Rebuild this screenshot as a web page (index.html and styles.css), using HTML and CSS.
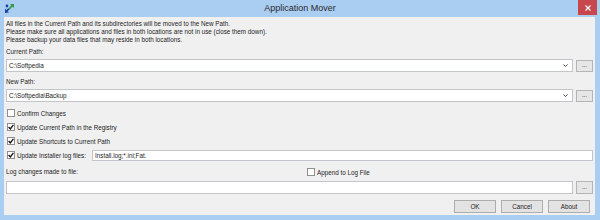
FILE: index.html
```html
<!DOCTYPE html>
<html>
<head>
<meta charset="utf-8">
<title>Application Mover</title>
<link rel="stylesheet" href="styles.css">
</head>
<body>
<div class="window">
  <div class="titlebar">
    <svg class="app-icon" width="11" height="11" viewBox="0 0 11 11">
      <path d="M6 1 L10 1 L10 5 L8.6 3.6 L5.5 6.7 L4.3 5.5 L7.4 2.4 Z" fill="#2f9a3c"/>
      <path d="M1 10 L1 5.6 L2.4 7 L4.2 5.2 L5.4 6.4 L3.6 8.2 L5 9.6 Z" fill="#1d3fae"/>
      <circle cx="3" cy="3" r="1.4" fill="#1d3fae"/>
    </svg>
    <div class="title">Application Mover</div>
    <div class="close">
      <svg width="6" height="6" viewBox="0 0 6 6"><path d="M0.5 0.5 L5.5 5.5 M5.5 0.5 L0.5 5.5" stroke="#fff" stroke-width="1.3"/></svg>
    </div>
  </div>
  <div class="client">
    <div class="info">
      <div>All files in the Current Path and its subdirectories will be moved to the New Path.</div>
      <div>Please make sure all applications and files in both locations are not in use (close them down).</div>
      <div>Please backup your data files that may reside in both locations.</div>
    </div>

    <div class="label first-label">Current Path:</div>
    <div class="path-row">
      <div class="combo"><span>C:\Softpedia</span><svg class="chev" width="5" height="3" viewBox="0 0 5 3"><polyline points="0.5,0.5 2.5,2.5 4.5,0.5" fill="none" stroke="#444" stroke-width="1"/></svg></div>
      <div class="browse">...</div>
    </div>

    <div class="label">New Path:</div>
    <div class="path-row">
      <div class="combo"><span>C:\Softpedia\Backup</span><svg class="chev" width="5" height="3" viewBox="0 0 5 3"><polyline points="0.5,0.5 2.5,2.5 4.5,0.5" fill="none" stroke="#444" stroke-width="1"/></svg></div>
      <div class="browse">...</div>
    </div>

    <div class="checks">
      <div class="check-row">
        <span class="box"></span><span>Confirm Changes</span>
      </div>
      <div class="check-row">
        <span class="box"><svg width="6" height="6" viewBox="0 0 6 6"><polyline points="0.6,3 2.3,4.9 5.4,0.8" fill="none" stroke="#111" stroke-width="1.3"/></svg></span><span>Update Current Path in the Registry</span>
      </div>
      <div class="check-row">
        <span class="box"><svg width="6" height="6" viewBox="0 0 6 6"><polyline points="0.6,3 2.3,4.9 5.4,0.8" fill="none" stroke="#111" stroke-width="1.3"/></svg></span><span>Update Shortcuts to Current Path</span>
      </div>
      <div class="check-row">
        <span class="box"><svg width="6" height="6" viewBox="0 0 6 6"><polyline points="0.6,3 2.3,4.9 5.4,0.8" fill="none" stroke="#111" stroke-width="1.3"/></svg></span><span class="installer-label">Update Installer log files:</span>
        <div class="text-input small">Install.log;*.ini;Fat.</div>
      </div>
    </div>

    <div class="log-row">
      <div class="label">Log changes made to file:</div>
      <div class="check-row append">
        <span class="box"></span><span>Append to Log File</span>
      </div>
    </div>

    <div class="path-row log-input">
      <div class="text-input"></div>
      <div class="browse">...</div>
    </div>

    <div class="buttons">
      <div class="btn">OK</div>
      <div class="btn">Cancel</div>
      <div class="btn">About</div>
    </div>
  </div>
</div>
</body>
</html>
```

FILE: styles.css
```css
html, body {
  margin: 0;
  padding: 0;
  background: #aacdf2;
}

.window {
  width: 600px;
  height: 220px;
  background: #aacdf2;
  display: flex;
  flex-direction: column;
  font-family: "Liberation Sans", Arial, sans-serif;
  font-size: 6.3px;
  color: #1c1c1c;
}

.titlebar {
  height: 17px;
  display: grid;
  grid-template-columns: 1fr auto 1fr;
  align-items: center;
}

.app-icon {
  justify-self: start;
  margin-left: 4px;
  margin-top: -1px;
}

.title {
  font-size: 9px;
  color: #2a2a2a;
  margin-top: -1px;
}

.close {
  justify-self: end;
  align-self: start;
  width: 19px;
  height: 15px;
  margin-right: 3px;
  background: #c7474c;
  display: flex;
  align-items: center;
  justify-content: center;
}

.client {
  margin: 0 5px 5px 4px;
  height: 198px;
  box-sizing: border-box;
  background: #f0f0f0;
  padding: 3px 2px 2px 2px;
  display: flex;
  flex-direction: column;
}

.info {
  line-height: 8px;
}

.label {
  height: 8px;
  line-height: 8px;
  margin-top: 6px;
}

.first-label {
  margin-top: 4px;
}

.path-row {
  margin-top: 3px;
  height: 13px;
  display: flex;
  align-items: center;
  gap: 3px;
}

.combo {
  flex: 1;
  height: 13px;
  box-sizing: border-box;
  border: 1px solid #c2c5ca;
  background: #fff;
  display: flex;
  align-items: center;
  justify-content: space-between;
  padding: 0 4px 0 2px;
}

.chev {
  display: block;
}

.browse {
  width: 17px;
  height: 12px;
  box-sizing: border-box;
  border: 1px solid #b5b5b5;
  background: #e6e6e6;
  display: flex;
  align-items: center;
  justify-content: center;
  line-height: 6px;
  padding-bottom: 2px;
  color: #333;
}

.checks {
  margin-top: 4px;
  display: flex;
  flex-direction: column;
}

.check-row {
  height: 14px;
  display: flex;
  align-items: center;
}

.box {
  width: 8px;
  height: 8px;
  box-sizing: border-box;
  border: 1px solid #8e8f8f;
  background: #fff;
  margin-left: 1px;
  margin-right: 2px;
  display: flex;
  align-items: center;
  justify-content: center;
}

.box svg {
  display: block;
}

.installer-label {
  width: 75px;
}

.text-input {
  flex: 1;
  height: 13px;
  box-sizing: border-box;
  border: 1px solid #c2c5ca;
  background: #fff;
  padding-left: 2px;
  display: flex;
  align-items: center;
}

.text-input.small {
  height: 11px;
}

.log-row {
  margin-top: 5px;
  height: 10px;
  display: grid;
  grid-template-columns: 300px 1fr;
  align-items: center;
}

.log-row .label {
  margin-top: 0;
}

.check-row.append {
  height: 10px;
}

.log-input {
  margin-top: 4px;
}

.log-input .browse {
  height: 13px;
}

.buttons {
  margin-top: 6px;
  height: 13px;
  display: flex;
  justify-content: flex-end;
  gap: 5px;
  padding-right: 3px;
}

.btn {
  width: 42px;
  height: 13px;
  box-sizing: border-box;
  border: 1px solid #adadad;
  background: #e3e3e3;
  display: flex;
  align-items: center;
  justify-content: center;
  color: #222;
}
```
